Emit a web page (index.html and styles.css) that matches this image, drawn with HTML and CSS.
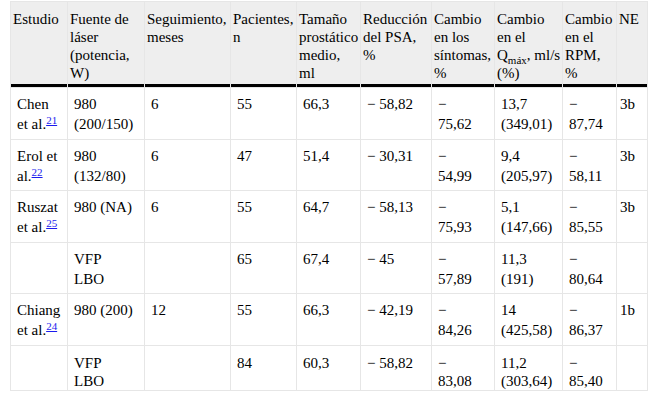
FILE: index.html
```html
<!DOCTYPE html>
<html lang="es">
<head>
<meta charset="utf-8">
<title>Tabla</title>
<link rel="stylesheet" href="styles.css">
</head>
<body>
<div class="wrap">
<table class="data">
  <colgroup>
    <col class="c1"><col class="c2"><col class="c3"><col class="c4"><col class="c5">
    <col class="c6"><col class="c7"><col class="c8"><col class="c9"><col class="c10">
  </colgroup>
  <thead>
    <tr>
      <th>Estudio</th>
      <th>Fuente de<br>láser<br>(potencia,<br>W)</th>
      <th>Seguimiento,<br>meses</th>
      <th>Pacientes,<br>n</th>
      <th>Tamaño<br>prostático<br>medio,<br>ml</th>
      <th>Reducción<br>del PSA,<br>%</th>
      <th>Cambio<br>en los<br>síntomas,<br>%</th>
      <th>Cambio<br>en el<br>Q<sub>máx</sub>, ml/s<br>(%)</th>
      <th>Cambio<br>en el<br>RPM,<br>%</th>
      <th>NE</th>
    </tr>
  </thead>
  <tbody>
    <tr>
      <td>Chen<br>et al.<sup><a href="#b21">21</a></sup></td>
      <td>980<br>(200/150)</td>
      <td>6</td>
      <td>55</td>
      <td>66,3</td>
      <td>− 58,82</td>
      <td>−<br>75,62</td>
      <td>13,7<br>(349,01)</td>
      <td>−<br>87,74</td>
      <td class="ne">3b</td>
    </tr>
    <tr>
      <td>Erol et<br>al.<sup><a href="#b22">22</a></sup></td>
      <td>980<br>(132/80)</td>
      <td>6</td>
      <td>47</td>
      <td>51,4</td>
      <td>− 30,31</td>
      <td>−<br>54,99</td>
      <td>9,4<br>(205,97)</td>
      <td>−<br>58,11</td>
      <td class="ne">3b</td>
    </tr>
    <tr>
      <td>Ruszat<br>et al.<sup><a href="#b25">25</a></sup></td>
      <td>980 (NA)</td>
      <td>6</td>
      <td>55</td>
      <td>64,7</td>
      <td>− 58,13</td>
      <td>−<br>75,93</td>
      <td>5,1<br>(147,66)</td>
      <td>−<br>85,55</td>
      <td class="ne">3b</td>
    </tr>
    <tr>
      <td></td>
      <td>VFP<br>LBO</td>
      <td></td>
      <td>65</td>
      <td>67,4</td>
      <td>− 45</td>
      <td>−<br>57,89</td>
      <td>11,3<br>(191)</td>
      <td>−<br>80,64</td>
      <td class="ne"></td>
    </tr>
    <tr>
      <td>Chiang<br>et al.<sup><a href="#b24">24</a></sup></td>
      <td>980 (200)</td>
      <td>12</td>
      <td>55</td>
      <td>66,3</td>
      <td>− 42,19</td>
      <td>−<br>84,26</td>
      <td>14<br>(425,58)</td>
      <td>−<br>86,37</td>
      <td class="ne">1b</td>
    </tr>
    <tr class="last">
      <td></td>
      <td>VFP<br>LBO</td>
      <td></td>
      <td>84</td>
      <td>60,3</td>
      <td>− 58,82</td>
      <td>−<br>83,08</td>
      <td>11,2<br>(303,64)</td>
      <td>−<br>85,40</td>
      <td class="ne"></td>
    </tr>
  </tbody>
</table>
</div>
</body>
</html>
```

FILE: styles.css
```css
html, body {
  margin: 0;
  padding: 0;
  background: #ffffff;
}

.wrap {
  padding: 1px 0 0 10px;
}

.data {
  table-layout: fixed;
  width: 638px;
  border-collapse: separate;
  border-spacing: 1px;
  background: #e6e6e6;
  font-family: "Liberation Serif", "Times New Roman", serif;
  font-size: 15px;
  color: #000;
}

.c1 { width: 56px; }
.c2 { width: 76px; }
.c3 { width: 85px; }
.c4 { width: 65px; }
.c5 { width: 63px; }
.c6 { width: 70px; }
.c7 { width: 62px; }
.c8 { width: 67px; }
.c9 { width: 53px; }
.c10 { width: 30px; }

.data th {
  background: #eeeeee;
  font-weight: normal;
  text-align: left;
  vertical-align: top;
  white-space: nowrap;
  line-height: 18px;
  padding: 8px 2px 2px 2px;
  border-bottom: 3px solid #000;
}

.data th sub {
  font-size: 11px;
  line-height: 0;
  vertical-align: -4px;
}

.data td {
  background: #ffffff;
  vertical-align: top;
  white-space: nowrap;
  line-height: 20px;
  padding: 6px 4px 4.6px 6px;
}

.data td.ne {
  padding-left: 3px;
}

.data tr.last td {
  line-height: 18px;
  padding-top: 8px;
  padding-bottom: 0;
}

.data sup {
  font-size: 11px;
  line-height: 0;
  vertical-align: 5px;
}

.data sup a {
  color: #1a1aee;
  text-decoration: underline;
}
```
